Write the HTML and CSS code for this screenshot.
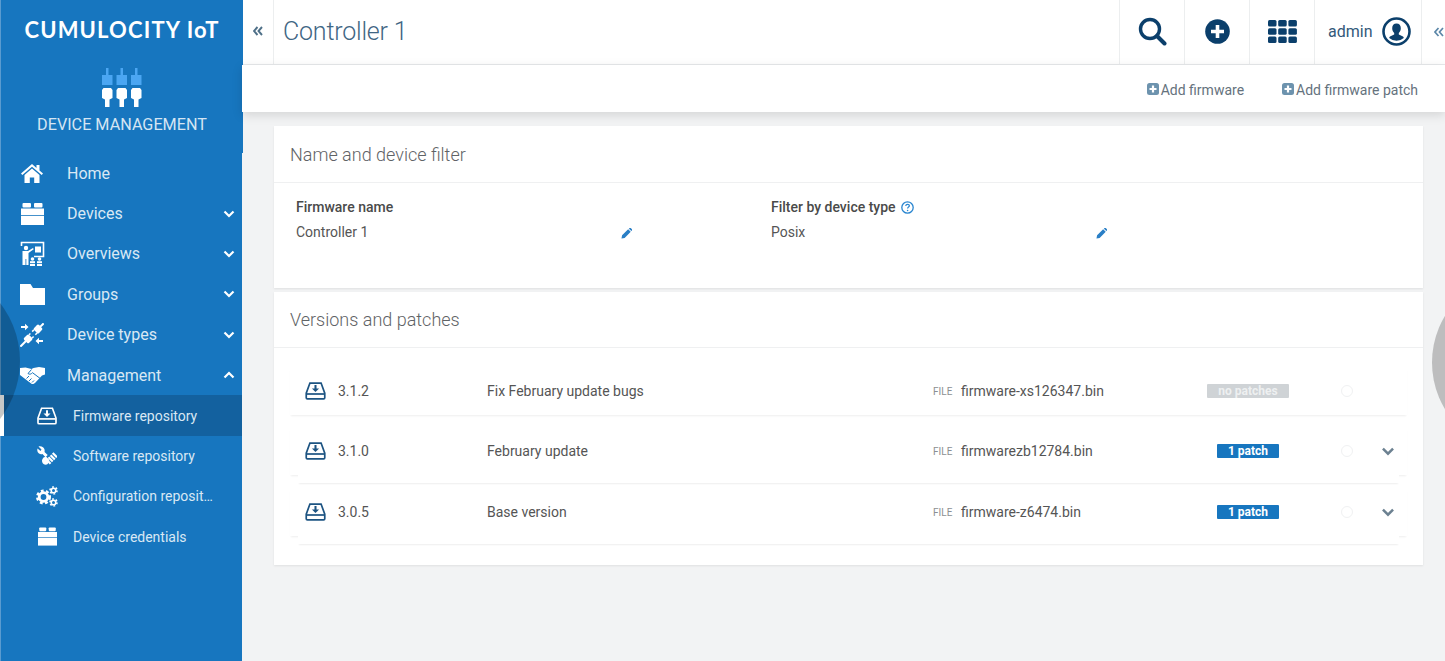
FILE: index.html
```html
<!DOCTYPE html>
<html lang="en">
<head>
    <meta charset="UTF-8">
    <meta name="viewport" content="width=device-width, initial-scale=1.0">
    <title>Controller 1</title>
    <link rel="stylesheet" href="styles.css">
</head>
<body>
    <svg class="defs" width="0" height="0">
        <symbol id="tray" viewBox="0 0 24 21">
            <path d="M5.500 1.200h13L22.800 13v5.500a1.300 1.300 0 0 1-1.300 1.300h-19a1.300 1.300 0 0 1-1.300-1.300V13z" fill="none" stroke="currentColor" stroke-width="2"/>
            <path d="M1.500 14h21" stroke="currentColor" stroke-width="2"/>
            <path d="M12 3.500v5.500" stroke="currentColor" stroke-width="2.400"/>
            <path d="M7.800 7.500h8.400L12 11.800z" fill="currentColor"/>
        </symbol>
        <symbol id="blocks" viewBox="0 0 23 22">
            <rect x="1.500" y="0" width="8.500" height="4.500" rx="1" fill="currentColor"/>
            <rect x="13" y="0" width="8.500" height="4.500" rx="1" fill="currentColor"/>
            <rect x="0" y="5.500" width="23" height="6.500" fill="currentColor"/>
            <rect x="0" y="12.800" width="23" height="9.200" fill="currentColor"/>
        </symbol>
        <symbol id="chev-down" viewBox="0 0 12 8">
            <path d="M1.500 1.500 6 6l4.500-4.500" fill="none" stroke="currentColor" stroke-width="2.200"/>
        </symbol>
        <symbol id="pencil" viewBox="0 0 12 12">
            <path d="M0.500 11.500 1.200 8 7.800 1.400l2.800 2.800L4 10.800zM8.600.7 9.300 0a1 1 0 0 1 1.300 0l1.400 1.400a1 1 0 0 1 0 1.300l-.7.7z" fill="currentColor"/>
        </symbol>
        <symbol id="plus-box" viewBox="0 0 12 12">
            <rect width="12" height="12" rx="2.500" fill="currentColor"/>
            <path d="M6 2.500v7M2.500 6h7" stroke="#fff" stroke-width="2.200"/>
        </symbol>
    </svg>

    <div class="shade shade-left"></div>
    <div class="shade shade-right"></div>

    <aside class="sidebar">
        <div class="brand">
            <div class="brand-name">CUMULOCITY IoT</div>
            <svg class="brand-icon" width="40" height="40" viewBox="0 0 40 40">
                <g fill="#4ba6f2">
                    <rect x="4" y="0" width="2.500" height="8"/><rect x="0" y="7" width="10.500" height="10"/>
                    <rect x="18.500" y="0" width="2.500" height="8"/><rect x="14.500" y="7" width="10.500" height="10"/>
                    <rect x="33" y="0" width="2.500" height="8"/><rect x="29" y="7" width="10.500" height="10"/>
                </g>
                <g fill="#fff">
                    <path d="M1.500 20h7.500l1.500 2v8l-3 1.500V39h-4.500v-7.500L0 30v-8z"/>
                    <path d="M16 20h7.500l1.500 2v8l-3 1.500V39h-4.500v-7.500L14.500 30v-8z"/>
                    <path d="M30.500 20H38l1.500 2v8l-3 1.500V39H32v-7.500L29 30v-8z"/>
                </g>
            </svg>
            <div class="brand-app">DEVICE MANAGEMENT</div>
        </div>
        <nav class="nav">
            <a class="nav-item">
                <span class="nav-icon">
                    <svg width="22" height="19" viewBox="0 0 22 19"><path d="M11 0 0 9.500l1.300 1.500L11 2.700l9.700 8.300L22 9.500l-3.500-3V1h-3v3z" fill="#fff"/><path d="M3.500 11 11 4.600l7.500 6.400V19h-5.300v-5.500H8.800V19H3.500z" fill="#fff"/></svg>
                </span>
                Home
            </a>
            <a class="nav-item">
                <span class="nav-icon"><svg class="white" width="23" height="22"><use href="#blocks"/></svg></span>
                Devices
                <svg class="nav-chev" width="12" height="8"><use href="#chev-down"/></svg>
            </a>
            <a class="nav-item">
                <span class="nav-icon">
                    <svg width="25" height="25" viewBox="0 0 25 25" fill="#fff">
                        <path d="M1.500 5V1.500h22v14H14" fill="none" stroke="#fff" stroke-width="1.600"/>
                        <rect x="15" y="5.500" width="6" height="6"/>
                        <circle cx="6" cy="7" r="2.200"/>
                        <path d="M2.500 10h5.500l5-3 .7 1.300L8.500 12v12H6.300v-6H5.500v6H2.500z"/>
                        <circle cx="12.500" cy="18" r="1.800"/><circle cx="19.500" cy="18" r="1.800"/>
                        <rect x="10" y="20.200" width="5" height="2"/><rect x="17" y="20.200" width="5" height="2"/>
                        <rect x="10" y="23" width="5" height="2"/><rect x="17" y="23" width="5" height="2"/>
                    </svg>
                </span>
                Overviews
                <svg class="nav-chev" width="12" height="8"><use href="#chev-down"/></svg>
            </a>
            <a class="nav-item">
                <span class="nav-icon">
                    <svg width="25" height="21" viewBox="0 0 25 21"><path d="M0 0h10.500l2.500 4h12v17H0z" fill="#fff"/></svg>
                </span>
                Groups
                <svg class="nav-chev" width="12" height="8"><use href="#chev-down"/></svg>
            </a>
            <a class="nav-item">
                <span class="nav-icon">
                    <svg width="24" height="24" viewBox="0 0 24 24" fill="#fff">
                        <g transform="rotate(45 12 12)">
                            <rect x="11" y="-4.500" width="2" height="5"/>
                            <rect x="8.500" y="0" width="7" height="7" rx="1.500"/>
                            <rect x="9" y="7" width="1.500" height="2.500"/><rect x="13.500" y="7" width="1.500" height="2.500"/>
                            <rect x="9" y="12" width="1.500" height="2"/><rect x="13.500" y="12" width="1.500" height="2"/>
                            <rect x="8.500" y="14" width="7" height="7" rx="1.500"/>
                            <rect x="11" y="20.500" width="2" height="8"/>
                        </g>
                        <path d="M1 3h4V.8L8.500 4 5 7.200V5H1zM23 17h-4v-2.200L15.500 18l3.500 3.200V19h4z"/>
                    </svg>
                </span>
                Device types
                <svg class="nav-chev" width="12" height="8"><use href="#chev-down"/></svg>
            </a>
            <a class="nav-item">
                <span class="nav-icon">
                    <svg width="25" height="17" viewBox="0 0 25 17">
                        <path d="M0 1l5.500-.5 6 1.500 2-1 5.500-1 6 1v6.500l-3 1-7 7.500-2.500 1.500-6-4.500L0 8z" fill="#fff"/>
                        <path d="M11.500 2.500 8 6.500c1.500 1.200 3 .8 4.500-.8l8 6M9 14l2.500-2.500M6.500 11.500 9 9M12 15.500l2-2" fill="none" stroke="#1776bf" stroke-width="1"/>
                    </svg>
                </span>
                Management
                <svg class="nav-chev nav-chev-up" width="12" height="8"><use href="#chev-down"/></svg>
            </a>
            <a class="nav-sub nav-sub-active">
                <span class="nav-sub-icon"><svg class="white" width="20" height="18"><use href="#tray"/></svg></span>
                <span class="nav-sub-text">Firmware repository</span>
            </a>
            <a class="nav-sub">
                <span class="nav-sub-icon">
                    <svg width="20" height="20" viewBox="0 0 20 20" fill="#fff">
                        <path d="M1.500 .5 4.500 3.500 3.500 5 .5 2.500C0 4.200.3 6 1.700 7.200c1.200 1 2.500 1.200 3.800.8l3 3.300 2.200-2.300L7.500 6C8 4.200 7.500 2.500 6 1.300 4.700.3 3 .1 1.500 .5z"/>
                        <g transform="rotate(45 14 13)">
                            <rect x="11" y="6.500" width="6" height="2.200"/>
                            <rect x="11" y="9.500" width="6" height="2.200"/>
                            <rect x="11" y="12.500" width="6" height="2.200"/>
                            <rect x="11" y="15.500" width="6" height="2.200"/>
                        </g>
                        <path d="M6.500 11.500l2.500-1 3.500 3.500-1.500 3.500c-1 1.500-3 1.500-4.500.5-1.500-1.300-2-3.500-1-5z"/>
                    </svg>
                </span>
                <span class="nav-sub-text">Software repository</span>
            </a>
            <a class="nav-sub">
                <span class="nav-sub-icon">
                    <svg width="22" height="21" viewBox="0 0 22 21" fill="none" stroke="#fff">
                        <circle cx="7.500" cy="11" r="4.300" stroke-width="2.800"/>
                        <circle cx="7.500" cy="11" r="6.300" stroke-width="2.400" stroke-dasharray="2.800 2.450"/>
                        <circle cx="17.500" cy="4.500" r="2.300" stroke-width="1.600"/>
                        <circle cx="17.500" cy="4.500" r="3.500" stroke-width="1.600" stroke-dasharray="1.800 1.870"/>
                        <circle cx="17.500" cy="16.500" r="2.300" stroke-width="1.600"/>
                        <circle cx="17.500" cy="16.500" r="3.500" stroke-width="1.600" stroke-dasharray="1.800 1.870"/>
                    </svg>
                </span>
                <span class="nav-sub-text">Configuration reposit…</span>
            </a>
            <a class="nav-sub">
                <span class="nav-sub-icon"><svg class="white" width="19" height="19"><use href="#blocks"/></svg></span>
                <span class="nav-sub-text">Device credentials</span>
            </a>
        </nav>
    </aside>

    <div class="main">
        <header class="topbar">
            <div class="collapse-cell">
                <svg width="10" height="10" viewBox="0 0 10 10"><path d="M4.500 1 1 5l3.500 4M9 1 5.500 5 9 9" fill="none" stroke="#4f7088" stroke-width="1.900"/></svg>
            </div>
            <h1 class="page-title">Controller 1</h1>
            <div class="top-cell">
                <svg width="29" height="29" viewBox="0 0 29 29"><circle cx="12" cy="12" r="9.500" fill="none" stroke="#0b3f6b" stroke-width="3.400"/><path d="m19 19 7.500 7.500" stroke="#0b3f6b" stroke-width="4" stroke-linecap="round"/></svg>
            </div>
            <div class="top-cell">
                <svg width="25" height="25" viewBox="0 0 25 25"><circle cx="12.500" cy="12.500" r="12.300" fill="#0b3f6b"/><path d="M12.500 6v13M6 12.500h13" stroke="#fff" stroke-width="3.600"/></svg>
            </div>
            <div class="top-cell">
                <svg width="29" height="23" viewBox="0 0 29 23" fill="#0b3f6b">
                    <rect x="0" y="0" width="8.500" height="6.500" rx="1.500"/><rect x="10.200" y="0" width="8.500" height="6.500" rx="1.500"/><rect x="20.400" y="0" width="8.500" height="6.500" rx="1.500"/>
                    <rect x="0" y="8.200" width="8.500" height="6.500" rx="1.500"/><rect x="10.200" y="8.200" width="8.500" height="6.500" rx="1.500"/><rect x="20.400" y="8.200" width="8.500" height="6.500" rx="1.500"/>
                    <rect x="0" y="16.400" width="8.500" height="6.500" rx="1.500"/><rect x="10.200" y="16.400" width="8.500" height="6.500" rx="1.500"/><rect x="20.400" y="16.400" width="8.500" height="6.500" rx="1.500"/>
                </svg>
            </div>
            <div class="user-cell">
                <span class="user-name">admin</span>
                <svg width="29" height="29" viewBox="0 0 29 29">
                    <circle cx="14.500" cy="14.500" r="13" fill="none" stroke="#0b3f6b" stroke-width="2.600"/>
                    <path d="M14.500 6.500c2.800 0 4.300 2 4.300 4.800 0 2-.8 3.700-2 4.700v1.500l4.200 2c.5.300.8 1 .8 1.500a11 11 0 0 1-14.600 0c0-.6.300-1.200.8-1.500l4.200-2V16c-1.200-1-2-2.700-2-4.700 0-2.800 1.500-4.800 4.300-4.800z" fill="#0b3f6b"/>
                </svg>
            </div>
            <div class="right-collapse">
                <svg width="10" height="10" viewBox="0 0 10 10"><path d="M4.500 1 1 5l3.500 4M9 1 5.500 5 9 9" fill="none" stroke="#5c87a8" stroke-width="1.700"/></svg>
            </div>
        </header>

        <div class="action-bar">
            <a class="action"><svg width="12" height="12"><use href="#plus-box"/></svg>Add firmware</a>
            <a class="action"><svg width="12" height="12"><use href="#plus-box"/></svg>Add firmware patch</a>
        </div>

        <div class="content">
            <section class="card">
                <h2 class="card-title card-title-tall">Name and device filter</h2>
                <div class="fields">
                    <div class="field">
                        <div class="field-label">Firmware name</div>
                        <div class="field-value">Controller 1 <svg class="edit" width="11" height="11"><use href="#pencil"/></svg></div>
                    </div>
                    <div class="field">
                        <div class="field-label">Filter by device type
                            <svg class="help" width="13" height="13" viewBox="0 0 13 13"><circle cx="6.500" cy="6.500" r="5.700" fill="none" stroke="#2a86d0" stroke-width="1.300"/><path d="M4.700 5c.1-1.100.9-1.700 1.900-1.700s1.800.6 1.800 1.500c0 1.300-1.800 1.300-1.800 2.700" fill="none" stroke="#2a86d0" stroke-width="1.200"/><circle cx="6.600" cy="9.500" r=".8" fill="#2a86d0"/></svg>
                        </div>
                        <div class="field-value">Posix <svg class="edit" width="11" height="11"><use href="#pencil"/></svg></div>
                    </div>
                </div>
            </section>

            <section class="card">
                <h2 class="card-title">Versions and patches</h2>
                <div class="versions">
                    <div class="row row-single">
                        <svg class="row-icon" width="21" height="18"><use href="#tray"/></svg>
                        <span>3.1.2</span>
                        <span>Fix February update bugs</span>
                        <span><span class="file-tag">FILE</span>firmware-xs126347.bin</span>
                        <span class="badge-cell"><span class="badge badge-none">no patches</span></span>
                        <span class="row-end"><span class="dim-dot"></span></span>
                    </div>
                    <div class="row">
                        <svg class="row-icon" width="21" height="18"><use href="#tray"/></svg>
                        <span>3.1.0</span>
                        <span>February update</span>
                        <span><span class="file-tag">FILE</span>firmwarezb12784.bin</span>
                        <span class="badge-cell"><span class="badge">1 patch</span></span>
                        <span class="row-end"><span class="dim-dot"></span><svg class="row-chev" width="14" height="9"><use href="#chev-down"/></svg></span>
                    </div>
                    <div class="row-under"></div>
                    <div class="row">
                        <svg class="row-icon" width="21" height="18"><use href="#tray"/></svg>
                        <span>3.0.5</span>
                        <span>Base version</span>
                        <span><span class="file-tag">FILE</span>firmware-z6474.bin</span>
                        <span class="badge-cell"><span class="badge">1 patch</span></span>
                        <span class="row-end"><span class="dim-dot"></span><svg class="row-chev" width="14" height="9"><use href="#chev-down"/></svg></span>
                    </div>
                    <div class="row-under"></div>
                </div>
            </section>
        </div>
    </div>
</body>
</html>
```

FILE: styles.css
```css
* {
    box-sizing: border-box;
}
html, body {
    height: 100%;
}
body {
    margin: 0;
    display: flex;
    position: relative;
    overflow: hidden;
    background: #f2f3f4;
    color: #555;
    font-family: Roboto, "Liberation Sans", sans-serif;
    font-size: 14px;
}
.defs {
    position: absolute;
}
.white {
    color: #fff;
}

/* the two round shadows at the edges of the window */
.shade {
    position: absolute;
    z-index: 5;
    background: rgba(0, 0, 0, 0.22);
    pointer-events: none;
}
.shade-left {
    left: 0;
    top: 303px;
    width: 20px;
    height: 116px;
    clip-path: circle(94px at -74px 58px);
}
.shade-right {
    right: 0;
    top: 315px;
    width: 13px;
    height: 95px;
    clip-path: circle(91px at 91px 47.5px);
}

/* sidebar */
.sidebar {
    width: 242px;
    flex: none;
    background: #1776bf;
    border-left: 1px solid #5a9bd0;
    color: #d9e8f4;
}
.brand {
    height: 153px;
    margin-right: -1px;
    background: #1776bf;
    position: relative;
    text-align: center;
    padding-top: 17px;
}
.brand-name {
    font-family: Lato, sans-serif;
    font-weight: 700;
    font-size: 22px;
    line-height: 26px;
    letter-spacing: 1.15px;
    color: #fff;
}
.brand-icon {
    display: block;
    margin: 25px auto 0;
}
.brand-app {
    font-size: 16.200px;
    line-height: 20px;
    margin-top: 7px;
    color: #d5e5f3;
}
.nav-item, .nav-sub {
    display: flex;
    align-items: center;
    height: 40.400px;
    white-space: nowrap;
}
.nav-item {
    padding-left: 18px;
    font-size: 16px;
}
.nav-icon {
    width: 26px;
    margin-right: 22px;
    display: flex;
    justify-content: center;
    color: #fff;
}
.nav-icon svg, .nav-sub-icon svg {
    display: block;
}
.nav-chev {
    margin-left: auto;
    margin-right: 7px;
    color: #fff;
}
.nav-chev-up {
    transform: rotate(180deg);
}
.nav-sub {
    padding-left: 34px;
}
.nav-sub-active {
    background: #13619f;
    border-left: 4px solid #fff;
    margin-left: -1px;
    padding-left: 31px;
}
.nav-sub-icon {
    width: 24px;
    margin-right: 14px;
    display: flex;
    justify-content: center;
}

/* top */
.main {
    flex: 1;
    min-width: 0;
    display: flex;
    flex-direction: column;
}
.topbar {
    height: 65px;
    display: flex;
    align-items: stretch;
    background: #fff;
    border-bottom: 1px solid #e8eaec;
}
.collapse-cell {
    width: 32px;
    display: flex;
    align-items: center;
    justify-content: center;
    border-right: 1px solid #eceeef;
    padding-bottom: 3px;
}
.page-title {
    flex: 1;
    margin: 0;
    padding-left: 9px;
    font-size: 25px;
    font-weight: 300;
    letter-spacing: -0.2px;
    line-height: 63px;
    color: #3f6684;
}
.top-cell {
    width: 65px;
    display: flex;
    align-items: center;
    justify-content: center;
    border-left: 1px solid #eceeef;
    padding-bottom: 1px;
}
.user-cell {
    width: 107px;
    display: flex;
    align-items: center;
    gap: 10px;
    padding-left: 13px;
    border-left: 1px solid #eceeef;
    padding-bottom: 1px;
}
.user-name {
    font-size: 16px;
    color: #33597a;
}
.right-collapse {
    width: 24px;
    display: flex;
    align-items: center;
    padding-left: 12px;
    border-left: 1px solid #eceeef;
}
.action-bar {
    height: 47px;
    position: relative;
    z-index: 1;
    display: flex;
    align-items: center;
    justify-content: flex-end;
    gap: 38px;
    padding: 2px 27px 0 0;
    background: #fff;
    box-shadow: 0 3px 10px rgba(0, 0, 0, 0.13);
}
.action {
    display: flex;
    align-items: center;
    color: #65727d;
}
.action svg {
    color: #6d93ae;
    margin: -2px 2px 0 0;
}

/* cards */
.content {
    padding: 14px 22px 0 32px;
    display: flex;
    flex-direction: column;
    gap: 4px;
}
.card {
    background: #fff;
    box-shadow: 0 1px 2px rgba(0, 0, 0, 0.08);
}
.card-title {
    margin: 0;
    height: 56px;
    padding-left: 16px;
    font-size: 18px;
    font-weight: 300;
    line-height: 56px;
    color: #5f6366;
    border-bottom: 1px solid #eff0f1;
}
.card-title-tall {
    height: 57px;
    line-height: 57px;
}
.fields {
    display: flex;
    height: 105px;
    padding: 14px 0 0 22px;
}
.field {
    width: 475px;
}
.field-label {
    font-weight: 500;
    line-height: 20px;
    color: #4a4a4a;
}
.help {
    vertical-align: -2px;
    margin-left: 2px;
}
.field-value {
    width: 336px;
    margin-top: 5px;
    line-height: 20px;
    display: flex;
    justify-content: space-between;
    align-items: center;
}
.edit {
    color: #2a7fc6;
    margin-top: 3px;
}
.versions {
    padding: 19px 16px 21px;
}
.row {
    height: 48px;
    display: grid;
    grid-template-columns: 48px 149px 446px 274px 82px 1fr;
    align-items: center;
    background: #fff;
    box-shadow: 0 2px 2px -1px rgba(0, 0, 0, 0.07);
}
.row-single {
    margin-bottom: 12px;
}
.row-icon {
    margin-left: 15px;
    color: #1d5482;
}
.file-tag {
    display: inline-block;
    width: 28px;
    font-size: 10px;
    color: #8b8f92;
    vertical-align: 1px;
}
.badge-cell {
    text-align: center;
    line-height: 0;
}
.badge {
    display: inline-block;
    width: 62px;
    height: 14px;
    border-radius: 1px;
    background: #1776bf;
    color: #fff;
    font-size: 12px;
    font-weight: 700;
    line-height: 14px;
    text-align: center;
}
.badge-none {
    width: 82px;
    background: #cfd3d6;
    color: #eef0f1;
}
.row-end {
    display: flex;
    align-items: center;
    gap: 28px;
    padding-left: 52px;
}
.dim-dot {
    width: 12px;
    height: 12px;
    border-radius: 50%;
    border: 1px solid #f0f1f2;
    flex: none;
}
.row-chev {
    color: #6c8191;
    flex: none;
}
.row-under {
    height: 8px;
    margin: 0 8px 5px;
    background: #fff;
    box-shadow: 0 2px 2px -1px rgba(0, 0, 0, 0.07);
}
.row-under:last-child {
    margin-bottom: 0;
}
```
